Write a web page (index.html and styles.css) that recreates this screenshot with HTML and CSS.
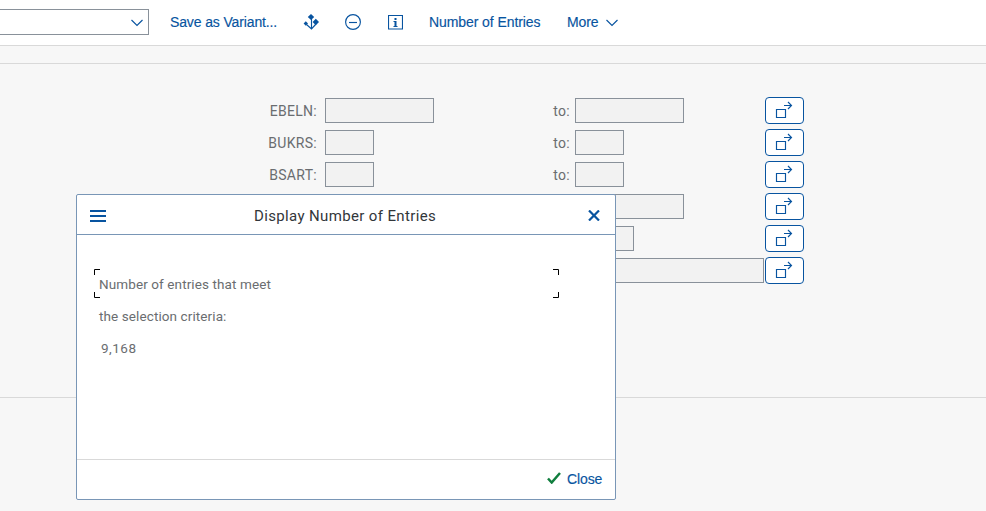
FILE: index.html
```
<!DOCTYPE html>
<html lang="en">
<head>
<meta charset="utf-8">
<title>Display Number of Entries</title>
<link rel="stylesheet" href="styles.css">
</head>
<body>
<svg class="defs" width="0" height="0">
  <symbol id="multi" viewBox="0 0 39 27"><path d="M11.5 12.5h9v8h-9zM19 8.500h7.500M23 5l3.500 3.500L23 12"/></symbol>
</svg>
<header class="toolbar">
  <div class="command"><svg width="12" height="8" viewBox="0 0 12 8"><path d="M.5 1L6 6.500 11.500 1"/></svg></div>
  <span class="tool save">Save as Variant...</span>
  <svg class="icon variant" width="16" height="16" viewBox="0 0 16 16"><path class="solid" d="M8 0l3.200 3L8 6 4.800 3zM12.800 4.800L16 8l-3.200 3.200L9.600 8zM2.800 7.300L5 9.500l-2.200 2.200L.6 9.500z"/><path d="M8.500 4v11M3.500 10.500l5 4.500 4.500-5"/></svg>
  <svg class="icon minus" width="16" height="16" viewBox="0 0 16 16"><circle cx="8" cy="8" r="7.400"/><path d="M4 8.500h8"/></svg>
  <svg class="icon info" width="15" height="15" viewBox="0 0 15 15"><path d="M.5.500h14v13.500H.5z"/><path class="solid" d="M6.500 3H8.500v2H6.500zM5.500 6H8.500v5h1v1h-4v-1h1V7h-1z"/></svg>
  <span class="tool entries">Number of Entries</span>
  <span class="tool more">More</span>
  <svg class="more-arrow" width="12" height="8" viewBox="0 0 12 8"><path d="M.5 1L6 6.500 11.500 1"/></svg>
</header>
<div class="strip"></div>
<main class="form">
  <div class="row"><label>EBELN:</label><i class="field wide"></i><span class="to">to:</span><i class="field wide"></i><button><svg><use href="#multi"/></svg></button></div>
  <div class="row"><label>BUKRS:</label><i class="field"></i><span class="to">to:</span><i class="field"></i><button><svg><use href="#multi"/></svg></button></div>
  <div class="row"><label>BSART:</label><i class="field"></i><span class="to">to:</span><i class="field"></i><button><svg><use href="#multi"/></svg></button></div>
  <div class="row"><label></label><i></i><span></span><i class="field wide"></i><button><svg><use href="#multi"/></svg></button></div>
  <div class="row"><label></label><i></i><span></span><i class="field medium"></i><button><svg><use href="#multi"/></svg></button></div>
  <div class="row"><label></label><i></i><span></span><i class="field full"></i><button><svg><use href="#multi"/></svg></button></div>
</main>
<section class="dialog">
  <div class="titlebar">
    <svg width="16" height="12" viewBox="0 0 16 12"><path d="M0 1h16M0 6h16M0 11h16"/></svg>
    <h1>Display Number of Entries</h1>
    <svg class="close-x" width="12" height="11" viewBox="0 0 12 11"><path d="M1 .5l10 10M11 .5L1 10.500"/></svg>
  </div>
  <div class="content">
    <div class="focus"><svg class="left" width="6" height="29" viewBox="0 0 6 29"><path d="M6 .5H.5V6M.5 23v5.500H6"/></svg><p class="meet">Number of entries that meet</p><svg width="6" height="29" viewBox="0 0 6 29"><path d="M0 .5h5.500V6M5.500 23v5.500H0"/></svg></div>
    <p class="criteria">the selection criteria:</p>
    <p class="count">9,168</p>
  </div>
  <footer><svg width="14" height="12" viewBox="0 0 14 12"><path d="M1 6.500l3.700 4L13 1"/></svg><span>Close</span></footer>
</section>
</body>
</html>
```
FILE: styles.css
```
* { box-sizing: border-box; }
body { margin: 0; width: 986px; height: 511px; overflow: hidden; position: relative; background: #f7f7f7; font: 14px/20px "Liberation Sans", Arial, sans-serif; color: #6a6d70; }
svg { display: block; flex: none; fill: none; stroke: #0854a0; stroke-width: 1.15; }
.defs { position: absolute; }
.solid { fill: #0854a0; stroke: none; }
.toolbar { height: 46px; background: #fff; border-bottom: 1px solid #d9d9d9; display: flex; align-items: flex-start; color: #0854a0; letter-spacing: -.08px; }
.command { width: 149px; height: 26px; margin-top: 9px; border: 1px solid #89919a; border-left: 0; display: flex; justify-content: flex-end; padding: 9px 5px 0 0; }
.tool { margin-top: 12px; white-space: nowrap; flex: none; -webkit-text-stroke: .15px; }
.save { width: 107px; margin-left: 21px; letter-spacing: -.13px; }
.variant { margin: 14px 0 0 26px; }
.minus { margin: 14px 0 0 26px; }
.info { margin: 15px 0 0 27px; }
.entries { width: 112px; margin-left: 26px; }
.more { width: 32px; margin-left: 26px; }
.more-arrow { margin: 19px 0 0 7px; }
.strip { height: 18px; border-bottom: 1px solid #d9d9d9; }
.form { height: 334px; padding-top: 33px; border-bottom: 1px solid #d9d9d9; display: flex; flex-direction: column; gap: 5px; }
.row { display: grid; grid-template-columns: 317px 8px 221px 24px 5px 190px 39px; height: 27px; align-items: start; font-family: Roboto, sans-serif; letter-spacing: .3px; }
.row > :nth-child(1) { grid-column: 1; text-align: right; padding-top: 4px; }
.row > :nth-child(2) { grid-column: 3; }
.row > :nth-child(3) { grid-column: 4; text-align: right; padding-top: 4px; }
.row > :nth-child(4) { grid-column: 6; }
.row > :nth-child(5) { grid-column: 7; }
.field { width: 49px; height: 25px; margin-top: 1px; border: 1px solid #89919a; background: #f2f2f2; }
.field.medium { width: 59px; }
.field.wide { width: 109px; }
.field.full { width: 189px; }
button { width: 39px; height: 27px; padding: 0; border: 1px solid #0854a0; border-radius: 4px; background: #fff; }
button svg { width: 39px; height: 27px; margin: -1px; }
.dialog { position: absolute; left: 76px; top: 194px; width: 540px; height: 306px; border: 1px solid #7996b6; border-radius: 2px; background: #fff; display: flex; flex-direction: column; }
.titlebar { height: 40px; border-bottom: 1px solid #7996b6; display: flex; align-items: center; padding: 2px 15px 0 13px; flex: none; }
.titlebar svg { stroke-width: 2; }
.titlebar .close-x { stroke-width: 2.2; }
h1 { margin: 0 0 0 148px; width: 336px; font: 15px/20px Roboto, sans-serif; letter-spacing: .36px; color: #32363a; white-space: nowrap; }
p { margin: 0; white-space: nowrap; }
.content { flex: 1; padding: 34px 0 0 17px; font: 13.5px/20px Roboto, sans-serif; letter-spacing: .1px; }
.focus { width: 465px; display: flex; height: 29px; }
.focus svg { stroke: #000; stroke-width: 1; }
.meet { flex: 1; margin: 5px 0 0 -1px; }
.criteria { margin: 8px 0 0 5px; }
.count { margin: 12px 0 0 7px; letter-spacing: .5px; }
footer { height: 40px; border-top: 1px solid #d9d9d9; display: flex; padding: 13px 0 0 470px; color: #0854a0; }
footer svg { stroke: #107e3e; stroke-width: 2.500; margin-top: -1px; }
footer span { margin: -4px 0 0 6px; letter-spacing: -.1px; -webkit-text-stroke: .15px; }
```
